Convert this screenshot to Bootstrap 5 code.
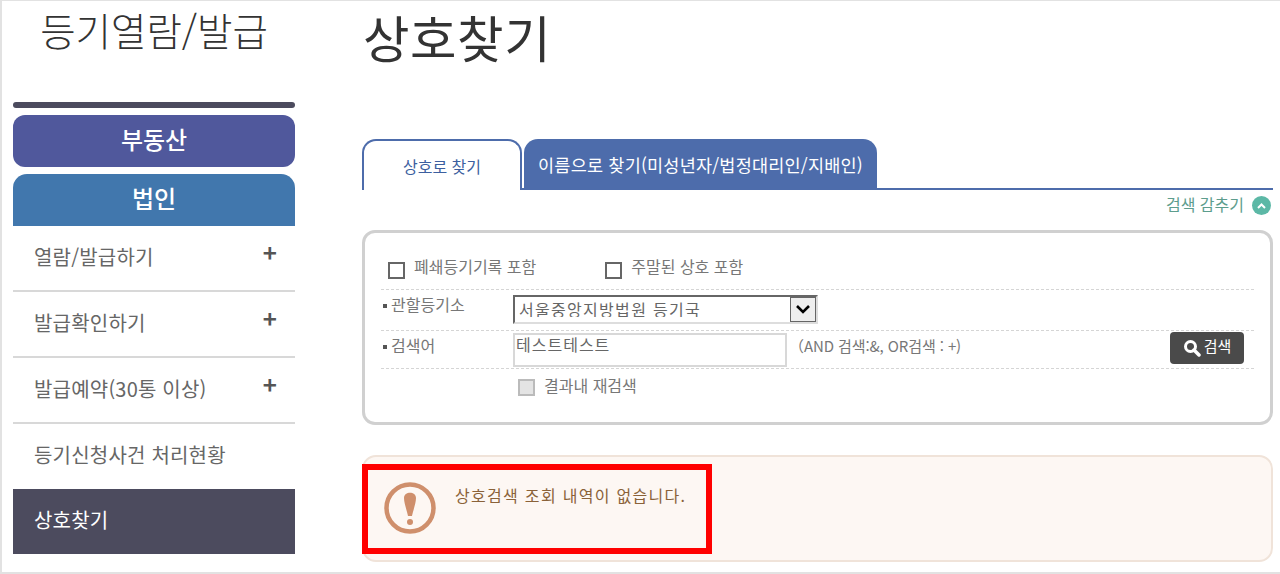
<!DOCTYPE html>
<html lang="ko">

<head>
    <meta charset="UTF-8">
    <meta name="viewport" content="width=device-width, initial-scale=1.0">
    <title>상호찾기</title>
    <link href="https://cdn.jsdelivr.net/npm/bootstrap@5.3.3/dist/css/bootstrap.min.css" rel="stylesheet">
    <style>
        html, body { height: 574px; overflow: hidden; }
        body { font-family: "Noto Sans CJK KR", "Noto Sans", sans-serif; background: #fff; color: #666; }
        .page-frame { width: 1280px; height: 574px; border: 1px solid #e2e2e2; border-width: 1px 0 2px 2px; padding-left: 11px; }
        .side-col { width: 282px; flex: none; }
        .side-title { height: 101px; margin: 0; padding-top: 5px; font-size: 38.5px; font-weight: 300; line-height: 46px; color: #333; text-align: center; }
        .side-rule { height: 6px; background: #4c4b5e; border-radius: 3px; margin-bottom: 7px; }
        .side-head { height: 52px; line-height: 48px; text-align: center; color: #fff; font-size: 24px; font-weight: 500; text-decoration: none; display: block; }
        .side-head-a { background: #50589c; border-radius: 12px; margin-bottom: 7px; }
        .side-head-b { background: #4177ad; border-radius: 14px 14px 0 0; }
        .side-menu .list-group-item { height: 66px; padding: 0 21px; border-width: 0 0 2px; border-color: #d8d8d8; border-radius: 0; font-size: 20px; letter-spacing: .2px; color: #666; line-height: 62px; }
        .side-menu .list-group-item:nth-child(4) { border-bottom: 0; height: 65px; }
        .side-menu .list-group-item.active { background: #4c4b5e; border: 0; color: #fff; height: 65px; margin-top: 0; }
        .plus-mark { font-size: 24px; font-weight: 700; color: #555; line-height: 52px; margin-right: -3px; }
        .main-col { width: 911px; flex: none; margin-left: 67px; }
        .main-title { height: 138px; margin: 0; padding-top: 4px; padding-left: 1px; font-size: 50.5px; letter-spacing: .6px; font-weight: 400; line-height: 62px; color: #333; }
        .tab-row { height: 51px; border-bottom: 2px solid #4d6cab; padding: 0; flex-wrap: nowrap; }
        .tab-on, .tab-off { height: 51px; display: block; border-radius: 14px 14px 0 0; text-align: center; text-decoration: none; line-height: 50px; }
        .tab-on { width: 160px; border: 2px solid #4d6cab; border-bottom: 0; background: #fff; color: #3c5f9f; font-size: 16px; position: relative; z-index: 1; }
        .tab-off { width: 353px; height: 49px; margin-left: 2px; background: #4d6cab; color: #fff; font-size: 17.5px; letter-spacing: .2px; line-height: 52px; }
        .hide-row { height: 40px; padding-top: 2px; padding-right: 2px; font-size: 16px; color: #5d9d8d; }
        .hide-dot { width: 19px; height: 19px; border-radius: 50%; background: #5cb8a6; }
        .search-box { height: 195px; border: 3px solid #d0d0d0; border-radius: 13px; padding: 14px 16px 0; font-size: 16px; color: #777; }
        .check-row { height: 42px; padding-left: 7px; padding-top: 7px; gap: 69px; }
        .field-box { width: 17px; height: 17px; border: 2px solid #666; background: #fff; flex: none; margin-top: 8px; }
        .field-box.is-off { border-color: #bbb; background: #e4e4e4; }
        .check-item { gap: 9px; }
        .field-row { border-top: 1px dashed #d5d5d5; height: 41px; }
        .field-row.second { height: 38px; }
        .field-label { width: 132px; padding-left: 2px; padding-top: 2px; flex: none; }
        .field-label::before { content: ""; display: inline-block; width: 4px; height: 4px; background: #555; margin-right: 4px; vertical-align: 3px; }
        .org-select { width: 305px; height: 29px; margin-top: 5px; border: 2px solid; border-color: #666 #ddd #ddd #666; border-radius: 0; padding: 0 30px 5px 4px; font-size: 16px; letter-spacing: 1.3px; color: #666; box-shadow: none;
            background-image: url("data:image/svg+xml,%3Csvg xmlns='http://www.w3.org/2000/svg' width='26' height='25'%3E%3Crect x='.5' y='.5' width='25' height='24' fill='%23eee' stroke='%23666'/%3E%3Cpath d='M7 9l6 6 6-6' fill='none' stroke='%23000' stroke-width='2.6'/%3E%3C/svg%3E");
            background-position: right 0 top 0; background-size: 26px 25px; }
        .word-input { width: 274px; height: 34px; margin-top: 2px; border: 2px solid #d8d8d8; border-radius: 0; padding: 0 1px 12px; font-size: 16px; line-height: 16px; letter-spacing: 1px; color: #666; box-shadow: none; }
        .word-hint { margin-left: 2px; padding-top: 4px; font-size: 15px; letter-spacing: -.1px; }
        .search-btn { width: 74px; height: 32px; margin-top: 1px; margin-right: 10px; padding: 0; gap: 3px; background: #4a4a4a; border: 0; border-radius: 4px; color: #fff; font-size: 15px; }
        .search-btn-text { margin-bottom: 3px; }
        .again-row { padding-left: 137px; padding-top: 4px; gap: 9px; border-top: 1px dashed #d5d5d5; }
        .again-row .field-box { margin-top: 6px; }
        .notice-box { height: 107px; margin-top: 30px; padding: 25px 20px; border: 2px solid #f0e3d9; border-radius: 14px; background: #fdf7f3; gap: 19px; color: #8a6239; font-size: 16px; letter-spacing: 1.3px; position: relative; }
        .notice-text { line-height: 22px; margin-top: 2px; }
        .red-mark { position: absolute; left: -2px; top: 7px; width: 350px; height: 90px; border: 6px solid #f00; }
    </style>
</head>

<body>

    <div class="page-frame d-flex">

        <!-- SIDEBAR -->
        <div class="side-col">
            <h2 class="side-title">등기열람/발급</h2>
            <div class="side-rule"></div>
            <a class="side-head side-head-a" href="#">부동산</a>
            <a class="side-head side-head-b" href="#">법인</a>
            <div class="list-group side-menu">
                <a href="#" class="list-group-item d-flex justify-content-between">열람/발급하기 <span class="plus-mark">+</span></a>
                <a href="#" class="list-group-item d-flex justify-content-between">발급확인하기 <span class="plus-mark">+</span></a>
                <a href="#" class="list-group-item d-flex justify-content-between">발급예약(30통 이상) <span class="plus-mark">+</span></a>
                <a href="#" class="list-group-item">등기신청사건 처리현황</a>
                <a href="#" class="list-group-item active">상호찾기</a>
            </div>
        </div>

        <!-- MAIN -->
        <div class="main-col">
            <h1 class="main-title">상호찾기</h1>

            <div class="tab-row d-flex">
                <a href="#" class="tab-on">상호로 찾기</a>
                <a href="#" class="tab-off">이름으로 찾기(미성년자/법정대리인/지배인)</a>
            </div>

            <div class="hide-row d-flex justify-content-end align-items-start gap-2">
                검색 감추기
                <span class="hide-dot d-flex align-items-center justify-content-center mt-1">
                    <svg width="9" height="6" viewBox="0 0 9 6"><path d="M1 5l3.500-3.500L8 5" fill="none" stroke="#fff" stroke-width="2"/></svg>
                </span>
            </div>

            <form class="search-box">
                <div class="check-row d-flex">
                    <label class="check-item d-flex"><span class="field-box"></span> 폐쇄등기기록 포함</label>
                    <label class="check-item d-flex"><span class="field-box"></span> 주말된 상호 포함</label>
                </div>
                <div class="field-row d-flex">
                    <span class="field-label">관할등기소</span>
                    <select class="form-select org-select">
                        <option>서울중앙지방법원 등기국</option>
                    </select>
                </div>
                <div class="field-row second d-flex">
                    <span class="field-label">검색어</span>
                    <input type="text" class="form-control word-input" value="테스트테스트">
                    <span class="word-hint">（AND 검색:&amp;, OR검색 : +)</span>
                    <button type="button" class="btn search-btn d-flex align-items-center justify-content-center ms-auto">
                        <svg width="18" height="18" viewBox="0 0 18 18"><circle cx="7.500" cy="7.500" r="5" fill="none" stroke="#fff" stroke-width="3"/><path d="M11 11l5 5" stroke="#fff" stroke-width="3.500" stroke-linecap="round"/></svg>
                        <span class="search-btn-text">검색</span>
                    </button>
                </div>
                <div class="again-row d-flex">
                    <span class="field-box is-off"></span> 결과내 재검색
                </div>
            </form>

            <div class="notice-box d-flex">
                <svg width="52" height="52" viewBox="0 0 52 52" class="flex-none">
                    <circle cx="26" cy="26" r="23.500" fill="none" stroke="#cf8f6c" stroke-width="4.500"/>
                    <path d="M20 16c0-7 12-7 12 0 0 5-3 13-4 18h-4c-1-5-4-13-4-18z" fill="#cf8f6c"/>
                    <circle cx="26" cy="40" r="3" fill="#cf8f6c"/>
                </svg>
                <div class="notice-text">상호검색 조회 내역이 없습니다.</div>
                <div class="red-mark"></div>
            </div>
        </div>
    </div>

    <script src="https://cdn.jsdelivr.net/npm/bootstrap@5.3.3/dist/js/bootstrap.bundle.min.js"></script>

</body>

</html>
